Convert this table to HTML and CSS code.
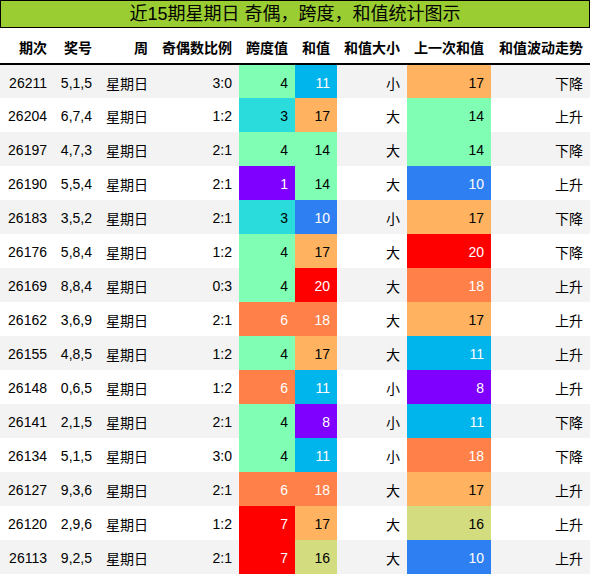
FILE: index.html
```html
<!DOCTYPE html>
<html lang="zh-CN">
<head>
  <meta charset="UTF-8">
  <title>近15期星期日 奇偶，跨度，和值统计图示</title>
  <link rel="stylesheet" href="styles.css">
</head>
<body>
  <div class="title">近15期星期日 奇偶，跨度，和值统计图示</div>
  <table class="stats">
    <thead>
      <tr>
        <th class="c-qi">期次</th>
        <th class="c-hao">奖号</th>
        <th class="c-zhou">周</th>
        <th class="c-jo">奇偶数比例</th>
        <th class="c-kd">跨度值</th>
        <th class="c-hz">和值</th>
        <th class="c-dx">和值大小</th>
        <th class="c-prev">上一次和值</th>
        <th class="c-trend">和值波动走势</th>
      </tr>
    </thead>
    <tbody>
      <tr><td>26211</td><td>5,1,5</td><td>星期日</td><td>3:0</td><td class="green">4</td><td class="lblue">11</td><td>小</td><td class="orange">17</td><td>下降</td></tr>
      <tr><td>26204</td><td>6,7,4</td><td>星期日</td><td>1:2</td><td class="cyan">3</td><td class="orange">17</td><td>大</td><td class="green">14</td><td>上升</td></tr>
      <tr><td>26197</td><td>4,7,3</td><td>星期日</td><td>2:1</td><td class="green">4</td><td class="green">14</td><td>大</td><td class="green">14</td><td>下降</td></tr>
      <tr><td>26190</td><td>5,5,4</td><td>星期日</td><td>2:1</td><td class="purple">1</td><td class="green">14</td><td>大</td><td class="blue">10</td><td>上升</td></tr>
      <tr><td>26183</td><td>3,5,2</td><td>星期日</td><td>2:1</td><td class="cyan">3</td><td class="blue">10</td><td>小</td><td class="orange">17</td><td>下降</td></tr>
      <tr><td>26176</td><td>5,8,4</td><td>星期日</td><td>1:2</td><td class="green">4</td><td class="orange">17</td><td>大</td><td class="red">20</td><td>下降</td></tr>
      <tr><td>26169</td><td>8,8,4</td><td>星期日</td><td>0:3</td><td class="green">4</td><td class="red">20</td><td>大</td><td class="coral">18</td><td>上升</td></tr>
      <tr><td>26162</td><td>3,6,9</td><td>星期日</td><td>2:1</td><td class="coral">6</td><td class="coral">18</td><td>大</td><td class="orange">17</td><td>上升</td></tr>
      <tr><td>26155</td><td>4,8,5</td><td>星期日</td><td>1:2</td><td class="green">4</td><td class="orange">17</td><td>大</td><td class="lblue">11</td><td>上升</td></tr>
      <tr><td>26148</td><td>0,6,5</td><td>星期日</td><td>1:2</td><td class="coral">6</td><td class="lblue">11</td><td>小</td><td class="purple">8</td><td>上升</td></tr>
      <tr><td>26141</td><td>2,1,5</td><td>星期日</td><td>2:1</td><td class="green">4</td><td class="purple">8</td><td>小</td><td class="lblue">11</td><td>下降</td></tr>
      <tr><td>26134</td><td>5,1,5</td><td>星期日</td><td>3:0</td><td class="green">4</td><td class="lblue">11</td><td>小</td><td class="coral">18</td><td>下降</td></tr>
      <tr><td>26127</td><td>9,3,6</td><td>星期日</td><td>2:1</td><td class="coral">6</td><td class="coral">18</td><td>大</td><td class="orange">17</td><td>上升</td></tr>
      <tr><td>26120</td><td>2,9,6</td><td>星期日</td><td>1:2</td><td class="red">7</td><td class="orange">17</td><td>大</td><td class="khaki">16</td><td>上升</td></tr>
      <tr><td>26113</td><td>9,2,5</td><td>星期日</td><td>2:1</td><td class="red">7</td><td class="khaki">16</td><td>大</td><td class="blue">10</td><td>上升</td></tr>
    </tbody>
  </table>
</body>
</html>
```

FILE: styles.css
```css
body {
  margin: 0;
  padding: 0;
  background: #ffffff;
  font-family: 'Liberation Sans', 'Noto Sans CJK SC', sans-serif;
  color: #000;
}

.title {
  box-sizing: border-box;
  width: 590px;
  height: 28px;
  line-height: 26px;
  background-color: #9acd32;
  border: 1px solid #000;
  text-align: center;
  font-size: 18px;
}

.stats {
  width: 590px;
  border-collapse: collapse;
  table-layout: fixed;
  font-size: 14px;
}

.stats th,
.stats td {
  text-align: right;
  padding: 0 7px 0 0;
  white-space: nowrap;
}

.stats th {
  height: 36px;
  padding-top: 3px;
  font-weight: bold;
  border-bottom: 2px solid #000;
  box-sizing: border-box;
}

.stats td {
  height: 34px;
  padding-top: 2px;
  box-sizing: border-box;
}

.stats tbody tr:nth-child(odd) {
  background-color: #f3f3f3;
}

.c-qi { width: 54px; }
.c-hao { width: 45px; }
.c-zhou { width: 56px; }
.c-jo { width: 84px; }
.c-kd { width: 56px; }
.c-hz { width: 42px; }
.c-dx { width: 70px; }
.c-prev { width: 84px; }
.c-trend { width: 99px; }

/* colour scale for values */
.purple { background-color: #8000ff; color: #fff; }
.blue { background-color: #2e80f2; color: #fff; }
.lblue { background-color: #00b4ec; color: #fff; }
.cyan { background-color: #2adcdc; color: #000; }
.green { background-color: #80ffb4; color: #000; }
.khaki { background-color: #d4dc80; color: #000; }
.orange { background-color: #ffb360; color: #000; }
.coral { background-color: #ff8048; color: #fff; }
.red { background-color: #ff0000; color: #fff; }
```
